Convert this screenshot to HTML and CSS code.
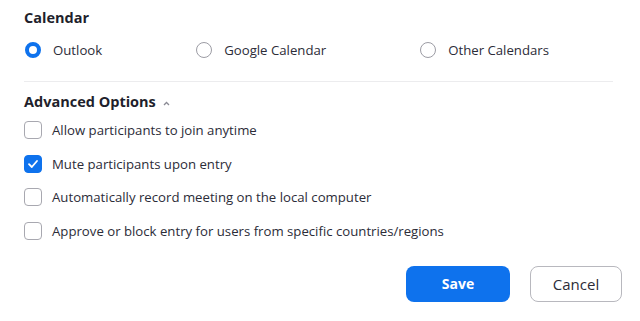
FILE: index.html
```html
<!DOCTYPE html>
<html lang="en">
<head>
    <meta charset="UTF-8">
    <meta name="viewport" content="width=device-width, initial-scale=1.0">
    <title>Meeting Options</title>
    <link rel="stylesheet" href="styles.css">
</head>
<body>
    <div class="panel">
        <div class="section-title">Calendar</div>
        <div class="radio-row">
            <label class="radio-item">
                <span class="radio checked"></span>
                <span class="label-text">Outlook</span>
            </label>
            <label class="radio-item">
                <span class="radio"></span>
                <span class="label-text">Google Calendar</span>
            </label>
            <label class="radio-item">
                <span class="radio"></span>
                <span class="label-text">Other Calendars</span>
            </label>
        </div>

        <div class="divider"></div>

        <div class="section-title advanced">
            Advanced Options
            <svg class="caret" width="7" height="5" viewBox="0 0 7 5">
                <path d="M1 4 L3.5 1.5 L6 4" fill="none" stroke="#8a8a94" stroke-width="1.3"/>
            </svg>
        </div>

        <div class="options">
            <label class="check-item">
                <span class="checkbox"></span>
                <span class="label-text">Allow participants to join anytime</span>
            </label>
            <label class="check-item">
                <span class="checkbox checked">
                    <svg width="12" height="10" viewBox="0 0 12 10">
                        <path d="M2 5.2 L4.8 8 L10 2" fill="none" stroke="white" stroke-width="1.8" stroke-linecap="round" stroke-linejoin="round"/>
                    </svg>
                </span>
                <span class="label-text">Mute participants upon entry</span>
            </label>
            <label class="check-item">
                <span class="checkbox"></span>
                <span class="label-text">Automatically record meeting on the local computer</span>
            </label>
            <label class="check-item">
                <span class="checkbox"></span>
                <span class="label-text">Approve or block entry for users from specific countries/regions</span>
            </label>
        </div>

        <div class="actions">
            <button class="btn save-btn">Save</button>
            <button class="btn cancel-btn">Cancel</button>
        </div>
    </div>
</body>
</html>
```

FILE: styles.css
```css
body {
    margin: 0;
    background-color: #ffffff;
    font-family: "Open Sans", "Noto Sans", sans-serif;
    color: #232333;
}
.panel {
    padding: 6px 18px 0 24px;
}
.section-title {
    font-size: 14.5px;
    font-weight: bold;
    line-height: 24px;
    color: #1f1f2c;
}
.advanced {
    display: flex;
    align-items: center;
    gap: 7px;
}
.caret {
    margin-top: 2px;
}
.radio-row {
    display: flex;
    gap: 93px;
    margin-top: 4px;
    height: 32px;
    align-items: center;
}
.radio-item {
    display: flex;
    align-items: center;
    gap: 12px;
}
.label-text {
    font-size: 13.2px;
    color: #2c2c38;
}
.radio {
    width: 14px;
    height: 14px;
    border: 1px solid #9c9ca4;
    border-radius: 50%;
    box-sizing: content-box;
    margin-left: 1px;
}
.radio.checked {
    width: 8px;
    height: 8px;
    border: 4px solid #0e72ed;
}
.divider {
    height: 1px;
    background-color: #ececee;
    margin: 15px 9px 8px 0;
}
.options {
    display: flex;
    flex-direction: column;
    margin-top: -1px;
}
.check-item {
    display: flex;
    align-items: center;
    gap: 10px;
    height: 33.7px;
}
.checkbox {
    width: 16px;
    height: 16px;
    border: 1px solid #a8a8b0;
    border-radius: 4px;
    display: flex;
    align-items: center;
    justify-content: center;
}
.checkbox.checked {
    background-color: #0e72ed;
    border-color: #0e72ed;
}
.actions {
    display: flex;
    justify-content: flex-end;
    gap: 20px;
    margin-top: 18px;
}
.btn {
    height: 36px;
    border-radius: 8px;
    font-family: "Open Sans", "Noto Sans", sans-serif;
    font-size: 14px;
    cursor: pointer;
}
.save-btn {
    width: 104px;
    background-color: #0e72ed;
    color: white;
    border: none;
    font-weight: bold;
}
.cancel-btn {
    width: 92px;
    background-color: white;
    color: #2c2c38;
    border: 1px solid #b8b8be;
    font-size: 15px;
}
```
